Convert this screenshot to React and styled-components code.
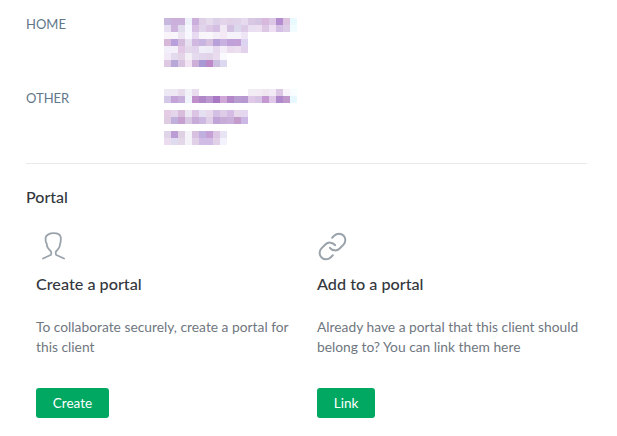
import styled, { createGlobalStyle } from "styled-components";

const GlobalStyle = createGlobalStyle`
  html, body {
    margin: 0;
    padding: 0;
    background: #fff;
    font-family: "Lato", "Open Sans", sans-serif;
  }
`;

// blurred address text, one list of colours per row of 7px squares
const homeCells = [
  ["c8b8e0","cbb0dc","ccb0dc","eef0fa","cbaedb","dfd0e8","e4dcec","dcd0e8","e4d4ea","e0d0e8","e0d2e8","e6daee","d8c8e4","d4c4e2","d8b8dc","dcc8e6","b48cd0","dcc4e0","e8faff"],
  ["e6e0f2","cdb4dc","e0dcee","f6f6fe","d8c0e4","e0d4ea","dcc8e4","d4bee2","f0e8f4","d4c0e0","dcd8ec","dccae6","e8e0f2","ecdff0","dcc8e4","eee0f2","d4c0e4","dccce8","f0fcff"],
  ["f8f4fa","f8f6fa","ece4f2","f8f6fe","e8daf0","f8f6fa","f8f8fc","f4eef8","f4e8f4","f6f2fa","f6f2fa","eee6f4"],
  ["d8b8d8","b8a0dc","d4bcdc","e8e0f0","d0b8e0","c8b4e0","d8c0e0","b8a0d8","c8b0e0","c0a0d8","c4a0d8","dcd4f0"],
  ["f2eefa","f4f0fa","e2c8e4","e4d8ec","e2d4ec","f0eef6","eeecf6","e8daee","f4eef8","eadcee","ecdff0","e2d2ec"],
  ["f2eaf6","e4daee","e4d4e8","f4eef6","e4dcee","e2d6ec","e2d4e8","e8dcee","fafafe"],
  ["dec8e4","b8a8d8","d8c4e0","f2e4f2","ccb0d8","a898d4","bc88c8","ccc0e0","dcd8f0"],
];

const otherCells = [
  ["eee8f4","eee8f4","e8dcec","f0f2f8","e8dcee",null,null,null,null,null,null,null,"f2ecf4","f2eaf4","f0e6f0","f2eaf4","dcc8e4","f8f4fa","f8feff"],
  ["d4c8e8","c4a4d8","c8b0dc","f0f4fc","c090cc","b088c8","bc98d0","a878c4","d0a8d8","b488c8","b89cd0","b898d0","e0c8e8","d8c4e4","c498d0","e0c8e8","b088cc","c098cc","e8f8ff"],
  [],
  ["e4cce4","e4d4ec","d8bcdc","ece6f2","dcc4e4","e4e0f2","e8d8ec","d4c0e4","dccce8","d4bce4","e8d8ec","e4d8f0"],
  ["e0cce0","c0b0dc","c8a0d0","d8c8e4","c8acd8","ccb8e0","e0d0e8","c0a4d8","c8acd8","ccb0dc","c49ccc","ccb8e4"],
  [],
  ["e0d4e8","bc9cd4","e0d0e4","f4f4f8","d8c0e0","c0b0e0","c4a0d4","dcc8e4","e8e4f4"],
  ["ecdcf0","e0dcf0","e4d8e8","f4f4f8","e0d0e8","d0bce4","d0bce4","e0d0e8","f4f2fc"],
];

const Page = styled.div`
  width: 617px;
  height: 436px;
  overflow: hidden;
  box-sizing: border-box;
  padding: 14px 30px 0 26px;
`;

const AddressList = styled.div`
  display: flex;
  flex-direction: column;
  gap: 21px;
  padding-bottom: 18px;
  border-bottom: 1px solid #e9e9e9;
`;

const AddressRow = styled.div`
  display: grid;
  grid-template-columns: 138px 1fr;
  align-items: start;
`;

const AddressLabel = styled.div`
  font-size: 13px;
  line-height: 20px;
  color: #61778a;
`;

const MosaicSvg = styled.svg`
  display: block;
  margin-top: ${({ $top }) => $top}px;
`;

const Section = styled.section`
  padding-top: 23px;
`;

const SectionTitle = styled.h2`
  margin: 0 0 25px;
  font-size: 16px;
  line-height: 20px;
  font-weight: 500;
  color: #33373d;
`;

const Options = styled.div`
  display: grid;
  grid-template-columns: 281px 281px;
  padding-left: 10px;
`;

const Option = styled.div`
  display: flex;
  flex-direction: column;
  align-items: flex-start;
`;

const IconBox = styled.div`
  width: 32px;
  height: 28px;
  display: flex;
  align-items: center;
`;

const IconSvg = styled.svg`
  display: block;
  flex: none;
  fill: none;
  stroke: #9aa3ab;
  stroke-width: ${({ $stroke }) => $stroke};
  stroke-linecap: round;
  stroke-linejoin: round;
  margin-left: ${({ $left }) => $left}px;
`;

const OptionTitle = styled.h3`
  margin: 12px 0 0;
  font-size: 16.2px;
  line-height: 24px;
  font-weight: 500;
  color: #33373d;
`;

const OptionText = styled.p`
  margin: 21px 0 0;
  width: 275px;
  font-size: 13.8px;
  line-height: 20px;
  color: #6f7780;
`;

const ActionButton = styled.button`
  margin-top: 31px;
  width: ${({ $width }) => $width}px;
  height: 30px;
  padding: 0;
  border: 0;
  border-radius: 3px;
  background: #00a862;
  color: #fff;
  font-family: inherit;
  font-size: 13.5px;
  cursor: pointer;
`;

const Mosaic = ({ cells, top }) => (
  <MosaicSvg $top={top} width="133" height={cells.length * 7}>
    {cells.map((row, y) =>
      row.map((color, x) =>
        color ? (
          <rect key={`${x}-${y}`} x={x * 7} y={y * 7} width="7" height="7" fill={`#${color}`} />
        ) : null
      )
    )}
  </MosaicSvg>
);

const PersonIcon = () => (
  <IconBox>
    <IconSvg $stroke="1.8" $left="5" width="25" height="28" viewBox="0 0 25 28">
      <path d="M2 26.5 L9.6 23 Q10.8 22 10 19.5 C8 17.5 5.8 15.5 5.8 12.5 C5.8 11 4.5 10.5 4.6 8 L4.6 5.5 C5 3 9 1.2 12.5 1.2 C16.5 1.2 19.5 3 19.8 5.5 L19.8 8 C19.9 10.5 19 11.5 19 12.5 C19 15.5 17 17.5 15 19.5 Q14.2 22 15.4 23 L23 26.5" />
    </IconSvg>
  </IconBox>
);

const LinkIcon = () => (
  <IconBox>
    <IconSvg $stroke="1.55" $left="0" width="31" height="31" viewBox="0 0 24 24">
      <path d="M10 13a5 5 0 0 0 7.54.54l3-3a5 5 0 0 0-7.07-7.07l-1.72 1.71" />
      <path d="M14 11a5 5 0 0 0-7.54-.54l-3 3a5 5 0 0 0 7.07 7.07l1.71-1.71" />
    </IconSvg>
  </IconBox>
);

export default function App() {
  return (
    <Page>
      <GlobalStyle />
      <AddressList>
        <AddressRow>
          <AddressLabel>HOME</AddressLabel>
          <Mosaic cells={homeCells} top={4} />
        </AddressRow>
        <AddressRow>
          <AddressLabel>OTHER</AddressLabel>
          <Mosaic cells={otherCells} top={1} />
        </AddressRow>
      </AddressList>
      <Section>
        <SectionTitle>Portal</SectionTitle>
        <Options>
          <Option>
            <PersonIcon />
            <OptionTitle>Create a portal</OptionTitle>
            <OptionText>To collaborate securely, create a portal for this client</OptionText>
            <ActionButton $width={73}>Create</ActionButton>
          </Option>
          <Option>
            <LinkIcon />
            <OptionTitle>Add to a portal</OptionTitle>
            <OptionText>Already have a portal that this client should belong to? You can link them here</OptionText>
            <ActionButton $width={58}>Link</ActionButton>
          </Option>
        </Options>
      </Section>
    </Page>
  );
}
